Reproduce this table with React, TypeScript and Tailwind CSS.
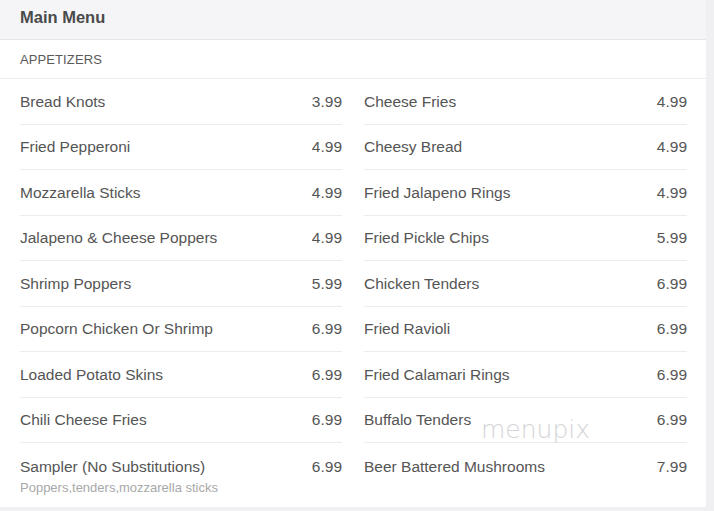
import React from "react";

type Item = { name: string; price: string; desc?: string };

const left: Item[] = [
  { name: "Bread Knots", price: "3.99" },
  { name: "Fried Pepperoni", price: "4.99" },
  { name: "Mozzarella Sticks", price: "4.99" },
  { name: "Jalapeno & Cheese Poppers", price: "4.99" },
  { name: "Shrimp Poppers", price: "5.99" },
  { name: "Popcorn Chicken Or Shrimp", price: "6.99" },
  { name: "Loaded Potato Skins", price: "6.99" },
  { name: "Chili Cheese Fries", price: "6.99" },
  { name: "Sampler (No Substitutions)", price: "6.99", desc: "Poppers,tenders,mozzarella sticks" },
];

const right: Item[] = [
  { name: "Cheese Fries", price: "4.99" },
  { name: "Cheesy Bread", price: "4.99" },
  { name: "Fried Jalapeno Rings", price: "4.99" },
  { name: "Fried Pickle Chips", price: "5.99" },
  { name: "Chicken Tenders", price: "6.99" },
  { name: "Fried Ravioli", price: "6.99" },
  { name: "Fried Calamari Rings", price: "6.99" },
  { name: "Buffalo Tenders", price: "6.99" },
  { name: "Beer Battered Mushrooms", price: "7.99" },
];

function Column({ items }: { items: Item[] }) {
  return (
    <div className="flex flex-col">
      {items.map((it, i) => (
        <div
          key={it.name}
          className={
            i < items.length - 1
              ? "border-b border-[#ececef] h-[45.5px] flex items-center justify-between"
              : "pt-[13px]"
          }
        >
          {i < items.length - 1 ? (
            <>
              <span>{it.name}</span>
              <span>{it.price}</span>
            </>
          ) : (
            <div className="flex flex-col">
              <div className="flex items-center justify-between leading-[22px]">
                <span>{it.name}</span>
                <span>{it.price}</span>
              </div>
              {it.desc && (
                <div className="text-[13px] leading-[16px] text-[#a8a8a8] mt-[2px]">{it.desc}</div>
              )}
            </div>
          )}
        </div>
      ))}
    </div>
  );
}

export default function App() {
  return (
    <div
      className="w-[714px] h-[511px] bg-[#f0f0f3] overflow-hidden"
      style={{ fontFamily: '"Liberation Sans", Arial, sans-serif' }}
    >
      <div className="w-[706px] h-[507px] bg-white relative">
        <div className="h-[40px] bg-[#f5f5f8] border-b border-[#e6e6ea] flex items-center px-[20px] pb-[4px]">
          <span className="text-[16.5px] font-bold text-[#4a4a4a]">Main Menu</span>
        </div>
        <div className="h-[39px] border-b border-[#ececef] flex items-center px-[20px] pt-[2px]">
          <span className="text-[13px] text-[#5a5a5a] tracking-[0.1px]">APPETIZERS</span>
        </div>
        <div className="grid grid-cols-[322px_323px] gap-x-[22px] pl-[20px] text-[15.5px] text-[#555]">
          <Column items={left} />
          <Column items={right} />
        </div>
        <div
          className="absolute left-[481px] top-[411px] text-[25px] text-[#d4d4d8] select-none"
          style={{ fontFamily: '"DejaVu Sans", sans-serif', fontWeight: 200 }}
        >
          menupix
        </div>
      </div>
    </div>
  );
}
